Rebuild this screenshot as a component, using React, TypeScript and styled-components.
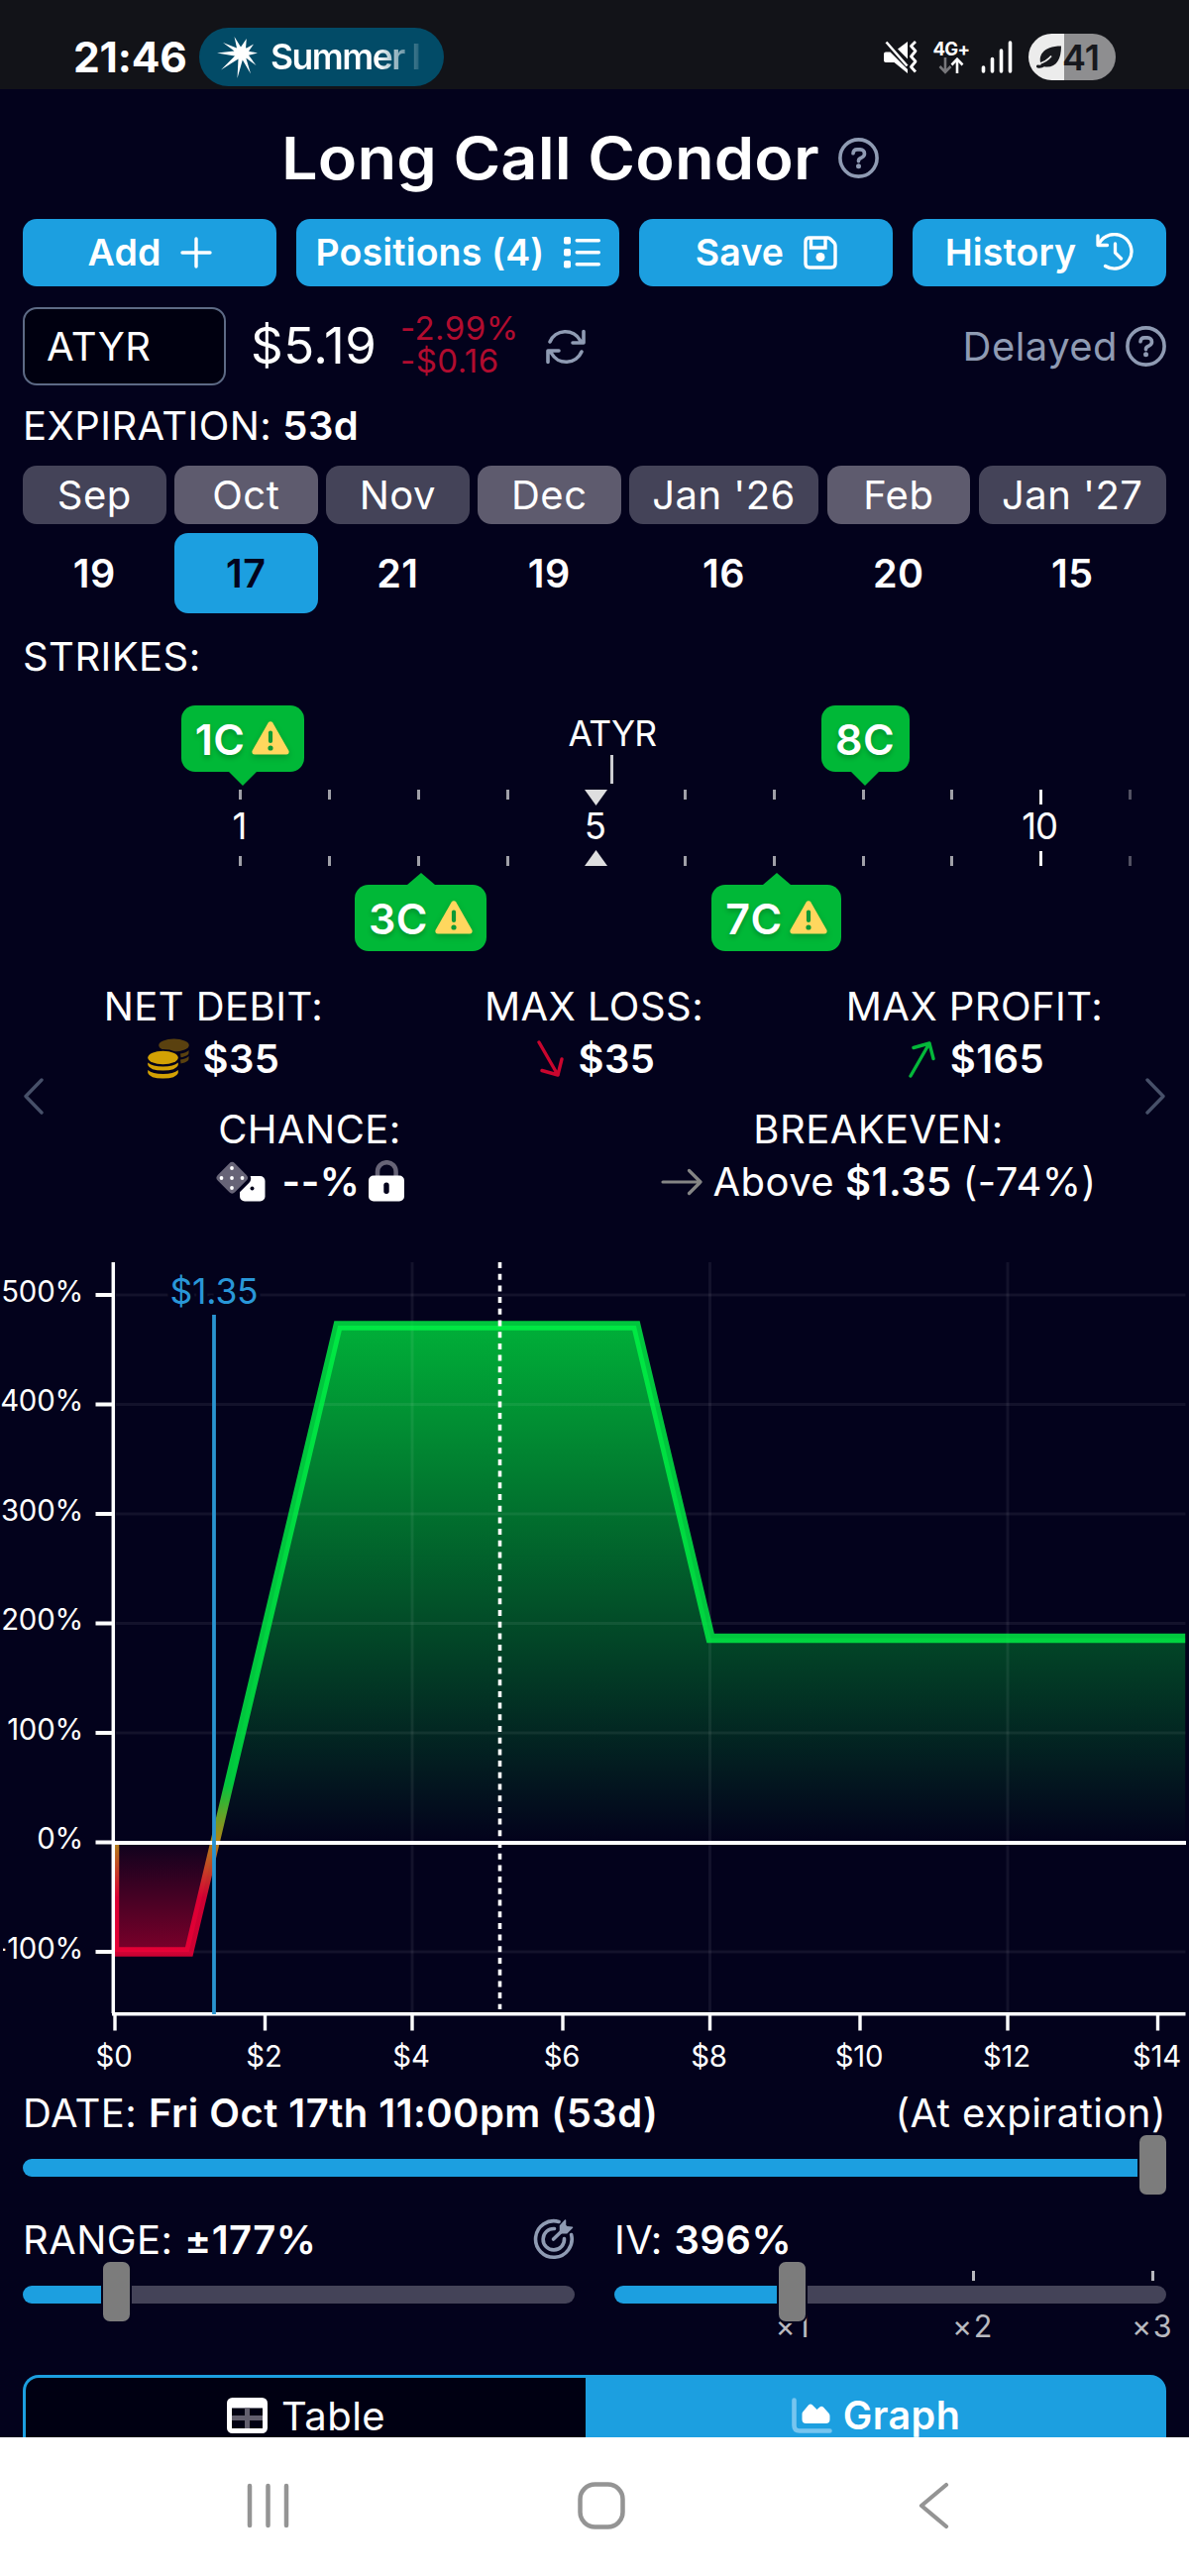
import React from 'react';
import styled, { createGlobalStyle, css } from 'styled-components';

const BG = '#03021c';
const BLUE = '#1c9fe0';
const GREEN = '#00b837';
const MUTED = '#8f9bb3';

const GlobalStyle = createGlobalStyle`
  html, body { margin: 0; padding: 0; background: ${BG}; }
  *, *::before, *::after { box-sizing: border-box; }
  svg { display: block; flex: none; }
`;

const Screen = styled.div`
  display: flex;
  flex-direction: column;
  width: 1200px;
  height: 2600px;
  overflow: hidden;
  background: ${BG};
  color: #fff;
  font-family: Inter, 'Liberation Sans', sans-serif;
  font-size: 40px;
  letter-spacing: 0.45px;
  white-space: nowrap;
`;

/* ---------- status bar ---------- */

const StatusBar = styled.header`
  display: flex;
  align-items: center;
  height: 90px;
  padding: 25px 74px 0 74px;
  background: #121318;
  flex: none;
`;

const Clock = styled.span`
  width: 127px;
  font-size: 42.5px;
  font-weight: 700;
  letter-spacing: -0.2px;
`;

const NowBar = styled.div`
  display: flex;
  align-items: center;
  width: 247px;
  height: 59px;
  padding-left: 17px;
  border-radius: 30px;
  background: #024b67;
`;

const NowBarText = styled.span`
  margin-left: 12px;
  font-size: 35.5px;
  font-weight: 600;
  letter-spacing: -1.5px;
  background: linear-gradient(90deg, #fff 0 108px, rgba(255, 255, 255, 0.45) 134px, rgba(255, 255, 255, 0.1) 152px);
  background-clip: text;
  -webkit-background-clip: text;
  color: transparent;
`;

const StatusIcons = styled.div`
  display: flex;
  align-items: center;
  margin-left: auto;
`;

const Network = styled.div`
  display: flex;
  flex-direction: column;
  align-items: center;
  width: 36px;
  margin: 0 12px 0 16px;
  font-size: 18.5px;
  font-weight: 700;
  line-height: 18px;
  letter-spacing: -0.6px;
`;

const Battery = styled.div`
  display: flex;
  align-items: center;
  width: 88px;
  height: 47px;
  margin-left: 16px;
  padding-left: 8px;
  border-radius: 24px;
  background: linear-gradient(90deg, #ececec 0 36px, #8e8e90 36px);
  color: #17181d;
  font-size: 36px;
  font-weight: 600;
  letter-spacing: 0;
`;

/* ---------- header ---------- */

const TitleRow = styled.div`
  display: flex;
  align-items: center;
  height: 131px;
  padding: 8px 0 0 284px;
  flex: none;
`;

const Title = styled.h1`
  width: 491px;
  margin: 0 71px 0 0;
  font-size: 59px;
  font-weight: 560;
  letter-spacing: 0.1px;
  transform: scaleX(1.1);
  transform-origin: left center;
`;

const Section = styled.section`
  display: flex;
  flex-direction: column;
  padding: 0 23px;
  flex: none;
`;

const ButtonRow = styled.div`
  display: grid;
  grid-template-columns: 256px 326px 256px 256px;
  gap: 20px;
  height: 68px;
`;

const ActionButton = styled.button`
  display: flex;
  align-items: center;
  justify-content: center;
  gap: 20px;
  padding: 0 0 2px 1px;
  border: 0;
  border-radius: 14px;
  background: ${BLUE};
  color: #fff;
  font: 600 37.5px Inter, sans-serif;
  letter-spacing: 0.15px;
  svg { margin-top: 1px; }
`;

const QuoteRow = styled.div`
  display: flex;
  align-items: center;
  height: 79px;
  margin-top: 21px;
`;

const TickerField = styled.div`
  display: flex;
  align-items: center;
  width: 205px;
  height: 79px;
  padding-left: 22px;
  border: 2px solid #5d6a85;
  border-radius: 14px;
  background: #000010;
`;

const Price = styled.span`
  width: 128px;
  margin: -3px 23px 0 25px;
  font-size: 51px;
`;

const Change = styled.div`
  display: flex;
  flex-direction: column;
  width: 147px;
  margin-top: -3px;
  color: #b10c2f;
  font-size: 33px;
  line-height: 33px;
`;

const Delayed = styled.div`
  display: flex;
  align-items: center;
  gap: 8px;
  margin-left: auto;
  color: ${MUTED};
`;

const Heading = styled.div<{ $h: number }>`
  display: flex;
  align-items: center;
  gap: 11px;
  height: ${(p) => p.$h}px;
  b { font-weight: 600; }
`;

/* ---------- expirations ---------- */

const Months = styled.div`
  display: grid;
  grid-template-columns: repeat(4, 144.5px) 191px 144.5px 189.5px;
  column-gap: 8.5px;
  row-gap: 9px;
  grid-template-rows: 59px 81px;
`;

const Month = styled.div<{ $alt: boolean }>`
  display: flex;
  align-items: center;
  justify-content: center;
  border-radius: 14px;
  background: ${(p) => (p.$alt ? '#5e5b6e' : '#444358')};
`;

const Day = styled.div<{ $on: boolean }>`
  display: flex;
  align-items: center;
  justify-content: center;
  border-radius: 14px;
  font-size: 39.5px;
  font-weight: 600;
  background: ${(p) => (p.$on ? BLUE : 'transparent')};
  color: ${(p) => (p.$on ? BG : '#fff')};
`;

/* ---------- strikes ruler ---------- */

const Ruler = styled.section`
  position: relative;
  height: 274px;
  padding: 91px 0 0 198px;
  flex: none;
`;

const Scale = styled.div`
  display: grid;
  grid-template-columns: repeat(11, 89.75px);
`;

const Notch = styled.div<{ $dim: boolean }>`
  display: flex;
  flex-direction: column;
  align-items: center;
  height: 77px;
  opacity: ${(p) => (p.$dim ? 0.5 : 1)};
`;

const NotchEnd = styled.div<{ $bottom?: boolean }>`
  display: flex;
  align-items: ${(p) => (p.$bottom ? 'flex-end' : 'flex-start')};
  height: 16px;
`;

const Tick = styled.i<{ $major: boolean }>`
  width: 3px;
  height: ${(p) => (p.$major ? 15 : 10)}px;
  background: ${(p) => (p.$major ? '#f4f4f6' : '#a0a0a8')};
`;

const NotchLabel = styled.span`
  height: 45px;
  line-height: 43px;
  font-size: 36.5px;
  letter-spacing: -1px;
  margin-left: -3px;
`;

const Balloon = styled.div<{ $x: number; $w: number; $below?: boolean }>`
  position: absolute;
  left: ${(p) => p.$x - p.$w / 2}px;
  top: ${(p) => (p.$below ? 187 : 6)}px;
  display: flex;
  align-items: center;
  justify-content: center;
  gap: 7px;
  width: ${(p) => p.$w}px;
  height: 67px;
  border-radius: 14px;
  background: ${GREEN};
  font-size: 43px;
  font-weight: 600;
  letter-spacing: 0.4px;
  text-shadow: 0 3px 5px rgba(0, 0, 0, 0.22);
  svg { filter: drop-shadow(0 3px 3px rgba(0, 0, 0, 0.18)); margin-top: -2px; }
  &::after {
    content: '';
    position: absolute;
    left: 50%;
    margin-left: -14px;
    border: 14px solid transparent;
    ${(p) =>
      p.$below
        ? css`bottom: 100%; border-top: 0; border-bottom-color: ${GREEN}; border-bottom-width: 12.5px;`
        : css`top: 100%; border-bottom: 0; border-top-color: ${GREEN};`}
  }
`;

const SpotFlag = styled.div`
  position: absolute;
  left: 560px;
  top: 15px;
  display: flex;
  flex-direction: column;
  align-items: center;
  width: 116px;
  font-size: 35.5px;
  line-height: 40px;
  letter-spacing: -0.8px;
  i { width: 3px; height: 29px; margin: 1px 0 0 -1px; background: #cdcdd2; }
`;

/* ---------- stats ---------- */

const Stats = styled.section`
  display: flex;
  align-items: center;
  height: 270px;
  padding: 0 24px 18px 23.5px;
  flex: none;
`;

const StatGrid = styled.div`
  display: flex;
  flex-direction: column;
  gap: 18px;
  width: 1152px;
  margin: 0 -20px;
  padding-bottom: 4px;
`;

const StatRow = styled.div`
  display: flex;
  justify-content: center;
`;

const Stat = styled.div<{ $w: number }>`
  display: flex;
  flex-direction: column;
  align-items: center;
  width: ${(p) => p.$w}px;
  line-height: 53px;
`;

const StatValue = styled.div<{ $gap: number }>`
  display: flex;
  align-items: center;
  gap: ${(p) => p.$gap}px;
  height: 53px;
  b { font-weight: 600; }
  b + svg { margin: -2px 0 0 -8px; }
`;

/* ---------- chart ---------- */

const Chart = styled.svg`
  width: 1200px;
  height: 850px;
  font-family: Inter, sans-serif;
  font-size: 29.3px;
  letter-spacing: -0.2px;
`;

/* ---------- sliders ---------- */

const LabelRow = styled.div<{ $h: number; $top: number }>`
  display: flex;
  align-items: center;
  justify-content: space-between;
  height: ${(p) => p.$h}px;
  padding: ${(p) => p.$top}px 0 0 0;
  b { font-weight: 600; }
`;

const Columns = styled.div`
  display: grid;
  grid-template-columns: 1fr 1fr;
  column-gap: 40px;
`;

const SliderBox = styled.div`
  position: relative;
  display: flex;
  align-items: center;
  gap: 2px;
  height: 60px;
`;

const Fill = styled.div<{ $w: number }>`
  width: ${(p) => p.$w}px;
  height: 18px;
  border-radius: 9px 0 0 9px;
  background: ${BLUE};
`;

const Thumb = styled.div`
  position: relative;
  z-index: 1;
  width: 27px;
  height: 60px;
  margin-top: -7px;
  border-radius: 7px;
  background: #7c7c7c;
  box-shadow: 0 0 0 2px ${BG};
  flex: none;
`;

const Rest = styled.div`
  flex: 1;
  height: 18px;
  border-radius: 0 9px 9px 0;
  background: #444358;
`;

const Multiplier = styled.div<{ $x: number }>`
  position: absolute;
  left: ${(p) => p.$x - 40}px;
  top: 6px;
  display: flex;
  flex-direction: column;
  align-items: center;
  width: 80px;
  color: #b9b9bf;
  font-size: 30.5px;
  line-height: 36px;
  letter-spacing: 1.6px;
  i { width: 3px; height: 10px; margin-bottom: 28px; background: #b9b9bf; }
`;

/* ---------- tabs and navigation ---------- */

const Tabs = styled.div`
  display: flex;
  height: 82px;
  margin-top: 51px;
`;

const Tab = styled.div<{ $active?: boolean }>`
  display: flex;
  align-items: center;
  justify-content: center;
  border: 3px solid ${BLUE};
  ${(p) =>
    p.$active
      ? css`width: 586px; gap: 11px; background: ${BLUE}; border-radius: 0 16px 0 0; font-size: 39.5px; font-weight: 600;`
      : css`width: 568px; gap: 14px; background: #000012; border-right: 0; border-radius: 16px 0 0 0; padding-left: 1px;`}
`;

const Body = styled.main`
  display: flex;
  flex-direction: column;
  height: 2370px;
  overflow: hidden;
  flex: none;
`;

const NavBar = styled.nav`
  display: flex;
  align-items: center;
  justify-content: space-between;
  height: 140px;
  padding: 0 242px 3px 249px;
  background: #fff;
  flex: none;
`;

const HomeKey = styled.svg`
  width: 48px;
  height: 48px;
  margin-left: -7px;
`;

/* ---------- icons ---------- */

const Help = () => (
  <svg width="41" height="41" viewBox="0 0 41 41" fill="none" stroke={MUTED}>
    <circle cx="20.5" cy="20.5" r="18.6" strokeWidth="3.6" />
    <path d="M15 15.8c.2-2.6 1.6-3.9 4-3.9h3.2c2.6 0 4.3 1.7 4.3 4 0 1.700-.8 2.900-2.400 3.800l-2.400 1.400c-.8.5-1.200 1-1.200 2v.6" strokeWidth="3.600" strokeLinecap="round" />
    <circle cx="20.500" cy="28.800" r="2.500" fill={MUTED} stroke="none" />
  </svg>
);

const Burst = () => (
  <svg width="43" height="42" viewBox="0 0 43 42" fill="#fff">
    <path d="M18.500 0 25 10.500 30.800 2 30 12 38 7.500 33 14.800 42 16.500 33 18.800 40.500 29 30.300 21.500 35 37.500 26.800 23.500 21.500 42 22.500 22.500 5 33.500 19 19.500 1 16.500 18.500 14.500 7 6 21 11.500Z" />
    <circle cx="26.500" cy="16.500" r="6.500" />
  </svg>
);

const MuteVibrate = () => (
  <svg width="34" height="33" viewBox="0 0 34 33" fill="#fff">
    <path d="M0 13.500q0-2 2-2h4.500L24 29v4L10.500 22H2q-2 0-2-2ZM14 8.500 24 1v17.500Z" />
    <path d="m2.500 1.500 21 24" stroke="#fff" strokeWidth="2.600" />
    <path d="m32 1-4.500 4.500 4.500 5-4.500 5.500 4.500 5-4.500 5.500 4.500 5" fill="none" stroke="#fff" strokeWidth="2.800" strokeLinejoin="round" />
  </svg>
);

const DataArrows = () => (
  <svg width="26" height="17" viewBox="0 0 26 17" fill="none" strokeWidth="2.600">
    <path d="M7 0v14.500M1.500 9 7 14.800 12.500 9" stroke="#77777b" />
    <path d="M19 16V2M13.500 7.500 19 1.700l5.500 5.800" stroke="#fff" />
  </svg>
);

const Signal = () => (
  <svg width="32" height="33" viewBox="0 0 32 33" stroke="#fff" strokeWidth="3.600" strokeLinecap="round">
    <path d="M2.500 27v4M11.500 18.500V31M20.500 10v21M29.500 2v29" />
  </svg>
);

const Leaf = () => (
  <svg width="26" height="25" viewBox="0 0 26 25">
    <path d="M5 21C1 12 6 1.500 25 1.500 25 15 20 23.500 9 22.500Z" fill="#17181d" />
    <path d="M15 11.500Q10.500 17 2.500 19.500" stroke="#ececec" strokeWidth="1.800" fill="none" />
    <path d="M1.500 22q3 .8 6.500-1.500" stroke="#17181d" strokeWidth="3" fill="none" strokeLinecap="round" />
  </svg>
);

const Plus = () => (
  <svg width="32" height="32" viewBox="0 0 32 32" stroke="#fff" strokeWidth="3.400" strokeLinecap="round">
    <path d="M16 2v28M2 16h28" />
  </svg>
);

const List = () => (
  <svg width="37" height="32" viewBox="0 0 37 32" fill="#fff">
    {[0, 12, 24].map((y) => (
      <g key={y}>
        <rect x="0" y={y} width="7" height="7.500" rx="1.800" />
        <rect x="11.500" y={y + 2} width="25.500" height="3.400" rx="1.700" />
      </g>
    ))}
  </svg>
);

const Floppy = () => (
  <svg width="34" height="34" viewBox="0 0 34 34" fill="none" stroke="#fff" strokeWidth="3.400">
    <path d="M2 6q0-4 4-4h18.500q1.500 0 2.700 1.200l3.700 3.800Q32 8.200 32 10v18q0 4-4 4H6q-4 0-4-4Z" />
    <path d="M7.500 2.500V12H22V2.500" />
    <circle cx="17" cy="21.500" r="4.500" fill="#fff" stroke="none" />
  </svg>
);

const HistoryIcon = () => (
  <svg width="39" height="39" viewBox="0 0 39 39" fill="none" stroke="#fff" strokeWidth="3.300" strokeLinecap="round" strokeLinejoin="round">
    <path d="M3.500 10.500A17.300 17.300 0 1 1 9.500 33.500" />
    <path d="M2 3v9.500h9.500" />
    <path d="M19.500 11v9l6 6" />
  </svg>
);

const Refresh = () => (
  <svg width="40" height="38" viewBox="0 0 40 38" fill="none" stroke={MUTED} strokeWidth="3.600" strokeLinecap="round" strokeLinejoin="round">
    <path d="M4 14A17 17 0 0 1 34.500 12.500M38 3.500V15H27" />
    <path d="M36 24A17 17 0 0 1 5.500 25.500M2 34.500V23h11" />
  </svg>
);

const Warning = () => (
  <svg width="38" height="34" viewBox="0 0 38 34">
    <path d="M16.700 1.500a2.700 2.700 0 0 1 4.600 0l16 28a2.700 2.700 0 0 1-2.300 4H3a2.700 2.700 0 0 1-2.300-4Z" fill="#ffd75e" />
    <path d="M19 11.500v8.500" stroke="#0c9a35" strokeWidth="4.200" strokeLinecap="round" />
    <circle cx="19" cy="27" r="2.600" fill="#0c9a35" />
  </svg>
);

const Chevron = ({ flip }: { flip?: boolean }) => (
  <svg width="20" height="37" viewBox="0 0 20 37" fill="none" stroke="#475069" strokeWidth="3.400" strokeLinecap="round" strokeLinejoin="round">
    <path d={flip ? 'M2 2l16 16.500L2 35' : 'M18 2 2 18.500 18 35'} />
  </svg>
);

const Coins = () => (
  <svg width="42" height="41" viewBox="0 0 42 41">
    <g fill="#5a410f">
      <ellipse cx="26.500" cy="7" rx="15.300" ry="6.500" />
      <path d="M33 15.500q6-1 8.500-3.500v2.500c0 2.500-3.500 4-8 4.800zM33 21.500q6-1 8.500-3.500v2.500c0 2.500-3.500 4-8 5z" />
    </g>
    <ellipse cx="15.500" cy="19.500" rx="17.500" ry="8.500" fill={BG} />
    <g fill="#d3a104">
      <ellipse cx="15.500" cy="19.500" rx="15.300" ry="6.800" />
      <path d="M.2 24.500q4.500 4 15.300 4t15.300-4v2.500q-2 5.500-15.300 5.500T.2 27ZM.2 32q4.500 4 15.300 4t15.300-4v3q-2 5.500-15.300 5.500T.2 35Z" />
    </g>
  </svg>
);

const TrendArrow = ({ up }: { up?: boolean }) => (
  <svg width="32" height="38" viewBox="0 0 32 38" fill="none" stroke={up ? '#04b83a' : '#c9062e'} strokeWidth="3.400" strokeLinecap="round" strokeLinejoin="round">
    <path d={up ? 'M6 36 25 3M9 7.500 25 3l4 15.500' : 'M6 2l19 33M9 30.500 25 35l4-16'} />
  </svg>
);

const ArrowRight = () => (
  <svg width="42" height="28" viewBox="0 0 42 28" fill="none" stroke="#858585" strokeWidth="3.200" strokeLinecap="round" strokeLinejoin="round">
    <path d="M2 14h38M28.500 2.500 40 14 28.500 25.500" />
  </svg>
);

const Dice = () => (
  <svg width="51" height="41" viewBox="0 0 51 41">
    <rect x="25" y="15" width="25.500" height="25.500" rx="5" fill="#fff" />
    <rect x="4.500" y="4.500" width="26" height="26" rx="4" transform="rotate(45 17.500 17.500)" fill={BG} stroke={BG} strokeWidth="4" />
    <rect x="5" y="4.500" width="24.500" height="24.500" rx="4" transform="rotate(45 17.250 16.750)" fill="#676477" />
    <g fill="#fff">
      <circle cx="17" cy="7" r="1.900" />
      <circle cx="6.500" cy="17" r="1.900" />
      <circle cx="17" cy="17" r="1.900" />
      <circle cx="27.500" cy="17" r="1.900" />
      <circle cx="17" cy="27" r="1.900" />
    </g>
    <circle cx="37.500" cy="27.500" r="2" fill={BG} />
  </svg>
);

const Lock = () => (
  <svg width="36" height="42" viewBox="0 0 36 42">
    <path d="M9 17v-5.500a9.300 9.300 0 0 1 18.600 0V17" fill="none" stroke="#676477" strokeWidth="4.500" />
    <rect x="0" y="15.500" width="36" height="26" rx="5" fill="#fff" />
    <rect x="15.300" y="22.500" width="5.400" height="11.500" rx="2.700" fill={BG} />
  </svg>
);

const Target = () => (
  <svg width="42" height="42" viewBox="0 0 42 42" fill="none" stroke={MUTED} strokeWidth="3.600" strokeLinecap="round">
    <path d="M26 3.400A18.300 18.300 0 1 0 38.600 16.500" />
    <path d="M21.500 10.500A10.700 10.700 0 1 0 31.500 20.500" />
    <path d="M20.500 21 33 9" />
    <path d="M27.500 7.500 32.500 2v6.500l7 .8-5.500 5.500h-6.500Z" fill={MUTED} strokeWidth="1.500" strokeLinejoin="round" />
  </svg>
);

const TableIcon = () => (
  <svg width="41" height="36" viewBox="0 0 41 36">
    <rect width="41" height="36" rx="5.500" fill="#fff" />
    <rect x="5" y="10.500" width="31" height="20.500" fill="#000012" />
    <path d="M20.500 10.500V31M5 20.500h31" stroke="#625f6e" strokeWidth="5" />
  </svg>
);

const AreaIcon = () => (
  <svg width="41" height="36" viewBox="0 0 41 36">
    <path d="M2.500 2.500V28q0 5.500 5.500 5.500h30.500" fill="none" stroke="#77c5ef" strokeWidth="4.600" strokeLinecap="round" />
    <path d="M10.500 16.500q0-1.200.8-2.200l5.900-7q1.800-1.800 3.600 0l4.700 4.700 2.800-2.400q1.800-1.500 3.600 0l5.600 6.200q1 1.100 1 2.600V22q0 4-4 4H14.500q-4 0-4-4Z" fill="#fff" />
  </svg>
);

/* ---------- payoff chart ---------- */

const priceX = (p: number) => 115.5 + p * 75.2;
const pctY = (v: number) => 1859.5 - v * 1.105;

const PAYOFF: [number, number][] = [
  [0, 0], [0, -100], [1, -100], [3, 472], [7, 472], [8, 186.5], [14.374, 186.5],
];
const Y_TICKS = [500, 400, 300, 200, 100, 0, -100];
const X_TICKS: [number, number][] = [
  [0, 116], [2, 267.5], [4, 416], [6, 568], [8, 716.5], [10, 868], [12, 1017], [14, 1168.5],
];

const PayoffChart = () => {
  const line = PAYOFF.map(([p, v]) => `${priceX(p)},${pctY(v)}`).join(' ');
  const zero = pctY(0);
  return (
    <Chart viewBox="0 1250 1200 850">
      <defs>
        <linearGradient id="gain" gradientUnits="userSpaceOnUse" x1="0" y1="1337" x2="0" y2="1860">
          <stop offset="0" stopColor="#00af38" />
          <stop offset="1" stopColor="#00af38" stopOpacity="0" />
        </linearGradient>
        <linearGradient id="loss" gradientUnits="userSpaceOnUse" x1="0" y1="1860" x2="0" y2="1970">
          <stop offset="0" stopColor="#7c002a" stopOpacity="0.1" />
          <stop offset="1" stopColor="#7c002a" />
        </linearGradient>
        <linearGradient id="payoff" gradientUnits="userSpaceOnUse" x1="0" y1="1800" x2="0" y2="1915">
          <stop offset="0" stopColor="#00f746" />
          <stop offset="0.5" stopColor="#d8a616" />
          <stop offset="1" stopColor="#ff0038" />
        </linearGradient>
        <clipPath id="plot"><rect x="115" y="1270" width="1081.500" height="765" /></clipPath>
        <clipPath id="above"><rect x="115" y="1270" width="1081.500" height="589.500" /></clipPath>
        <clipPath id="below"><rect x="115" y="1859.500" width="1081.500" height="200" /></clipPath>
        <clipPath id="page"><rect x="3" y="1250" width="1197" height="850" /></clipPath>
      </defs>
      <polygon points={`${line} ${priceX(14.374)},${zero}`} fill="url(#gain)" clipPath="url(#above)" />
      <polygon points={`${line} ${priceX(14.374)},${zero}`} fill="url(#loss)" clipPath="url(#below)" />
      <g stroke="#fff" strokeOpacity="0.065" strokeWidth="3">
        {Y_TICKS.filter((v) => v !== 0).map((v) => <path key={v} d={`M117 ${pctY(v)}H1196.500`} />)}
        {[416, 716.5, 1017].map((x) => <path key={x} d={`M${x} 1274V2032`} />)}
      </g>
      <polyline points={line} fill="none" stroke="url(#payoff)" strokeOpacity="0.8" strokeWidth="9.500" strokeMiterlimit="10" clipPath="url(#plot)" />
      <g stroke="#fff" strokeWidth="4" fill="none">
        <path d="M114.300 1274V2032" strokeWidth="3.500" />
        <path d="M115 1860H1197" />
        <path d="M113 2032.700H1196.500" strokeWidth="3.400" />
        {Y_TICKS.map((v) => <path key={v} d={`M96.500 ${pctY(v)}H114`} />)}
        {X_TICKS.map(([p, x]) => <path key={p} d={`M${x} 2032V2049.500`} strokeWidth="3.400" />)}
      </g>
      <path d="M504.500 1274V2028" stroke="#fff" strokeWidth="3.600" strokeDasharray="6 5.700" />
      <path d="M216 1327V2033" stroke="#2a94d0" strokeWidth="3.800" />
      <text x="216" y="1315.500" textAnchor="middle" fontSize="35.500" fill="#2997d8" stroke={BG} strokeWidth="8" paintOrder="stroke">$1.35</text>
      <g fill="#fff">
        {Y_TICKS.map((v) => (
          <text key={v} x="84" y={pctY(v) + 6.5} textAnchor="end" clipPath={v < 0 ? 'url(#page)' : undefined}>{v}%</text>
        ))}
        {X_TICKS.map(([p, x]) => <text key={p} x={x - 1} y="2085.500" textAnchor="middle">${p}</text>)}
      </g>
    </Chart>
  );
};

/* ---------- data ---------- */

const EXPIRATIONS: [string, number][] = [
  ['Sep', 19], ['Oct', 17], ['Nov', 21], ['Dec', 19], ["Jan '26", 16], ['Feb', 20], ["Jan '27", 15],
];

const Slider = ({ fill, full, children }: { fill: number; full?: boolean; children?: React.ReactNode }) => (
  <SliderBox>
    {children}
    <Fill $w={fill} />
    <Thumb />
    {!full && <Rest />}
  </SliderBox>
);

const Pointer = ({ up }: { up?: boolean }) => (
  <svg width="23" height="16" viewBox="0 0 23 16" fill="#dededf">
    <path d={up ? 'M0 16 11.500 0 23 16Z' : 'M0 0h23L11.500 16Z'} />
  </svg>
);

const NotchMark = ({ n, up }: { n: number; up?: boolean }) =>
  n === 5 ? <Pointer up={up} /> : <Tick $major={n === 10} />;

export default function App() {
  return (
    <Screen>
      <GlobalStyle />
      <StatusBar>
        <Clock>21:46</Clock>
        <NowBar>
          <Burst />
          <NowBarText>Summer I</NowBarText>
        </NowBar>
        <StatusIcons>
          <MuteVibrate />
          <Network>4G+<DataArrows /></Network>
          <Signal />
          <Battery><Leaf />41</Battery>
        </StatusIcons>
      </StatusBar>

      <Body>
        <TitleRow>
          <Title>Long Call Condor</Title>
          <Help />
        </TitleRow>

        <Section>
          <ButtonRow>
            <ActionButton>Add <Plus /></ActionButton>
            <ActionButton>Positions (4) <List /></ActionButton>
            <ActionButton>Save <Floppy /></ActionButton>
            <ActionButton>History <HistoryIcon /></ActionButton>
          </ButtonRow>
          <QuoteRow>
            <TickerField>ATYR</TickerField>
            <Price>$5.19</Price>
            <Change>
              <span>-2.99%</span>
              <span>-$0.16</span>
            </Change>
            <Refresh />
            <Delayed>Delayed <Help /></Delayed>
          </QuoteRow>
          <Heading $h={81}>EXPIRATION: <b>53d</b></Heading>
          <Months>
            {EXPIRATIONS.map(([m], i) => <Month key={m} $alt={i % 2 === 1}>{m}</Month>)}
            {EXPIRATIONS.map(([m, d]) => <Day key={m} $on={m === 'Oct'}>{d}</Day>)}
          </Months>
          <Heading $h={87}>STRIKES:</Heading>
        </Section>

        <Ruler>
          <Scale>
            {Array.from({ length: 11 }, (_, i) => i + 1).map((n) => (
              <Notch key={n} $dim={n === 11}>
                <NotchEnd><NotchMark n={n} /></NotchEnd>
                <NotchLabel>{n === 1 || n % 5 === 0 ? n : ''}</NotchLabel>
                <NotchEnd $bottom><NotchMark n={n} up /></NotchEnd>
              </Notch>
            ))}
          </Scale>
          <SpotFlag>ATYR<i /></SpotFlag>
          <Balloon $x={244.5} $w={124}>1C<Warning /></Balloon>
          <Balloon $x={873} $w={89}>8C</Balloon>
          <Balloon $x={424.5} $w={133.5} $below>3C<Warning /></Balloon>
          <Balloon $x={783.5} $w={131.5} $below>7C<Warning /></Balloon>
        </Ruler>

        <Stats>
          <Chevron />
          <StatGrid>
            <StatRow>
              <Stat $w={384}>
                NET DEBIT:
                <StatValue $gap={14}><Coins /><b>$35</b></StatValue>
              </Stat>
              <Stat $w={384}>
                MAX LOSS:
                <StatValue $gap={14}><TrendArrow /><b>$35</b></StatValue>
              </Stat>
              <Stat $w={384}>
                MAX PROFIT:
                <StatValue $gap={14}><TrendArrow up /><b>$165</b></StatValue>
              </Stat>
            </StatRow>
            <StatRow>
              <Stat $w={574}>
                CHANCE:
                <StatValue $gap={17}><Dice /><b>--%</b><Lock /></StatValue>
              </Stat>
              <Stat $w={574}>
                BREAKEVEN:
                <StatValue $gap={11}><ArrowRight />Above <b>$1.35</b> (-74%)</StatValue>
              </Stat>
            </StatRow>
          </StatGrid>
          <Chevron flip />
        </Stats>

        <PayoffChart />

        <Section>
          <LabelRow $h={58} $top={6}>
            <span>DATE: <b>Fri Oct 17th 11:00pm (53d)</b></span>
            <span>(At expiration)</span>
          </LabelRow>
          <Slider fill={1125} full />
          <Columns>
            <div>
              <LabelRow $h={68} $top={16}>
                <span>RANGE: <b>±177%</b></span>
                <Target />
              </LabelRow>
              <Slider fill={79} />
            </div>
            <div>
              <LabelRow $h={68} $top={16}>
                <span>IV: <b>396%</b></span>
              </LabelRow>
              <Slider fill={164}>
                <Multiplier $x={180.5}><i />×1</Multiplier>
                <Multiplier $x={362}><i />×2</Multiplier>
                <Multiplier $x={543}><i />×3</Multiplier>
              </Slider>
            </div>
          </Columns>
          <Tabs>
            <Tab><TableIcon />Table</Tab>
            <Tab $active><AreaIcon />Graph</Tab>
          </Tabs>
        </Section>
      </Body>

      <NavBar>
        <svg width="44" height="46" viewBox="0 0 44 46" stroke="#949494" strokeWidth="4.500" strokeLinecap="round">
          <path d="M3 3v40M21.500 3v40M40 3v40" />
        </svg>
        <HomeKey viewBox="0 0 48 48" fill="none" stroke="#949494" strokeWidth="4.500">
          <rect x="2.500" y="2.500" width="43" height="43" rx="15" />
        </HomeKey>
        <svg width="31" height="48" viewBox="0 0 31 48" fill="none" stroke="#949494" strokeWidth="4.200" strokeLinecap="round" strokeLinejoin="round">
          <path d="M28 3 3 24l25 21" />
        </svg>
      </NavBar>
    </Screen>
  );
}
